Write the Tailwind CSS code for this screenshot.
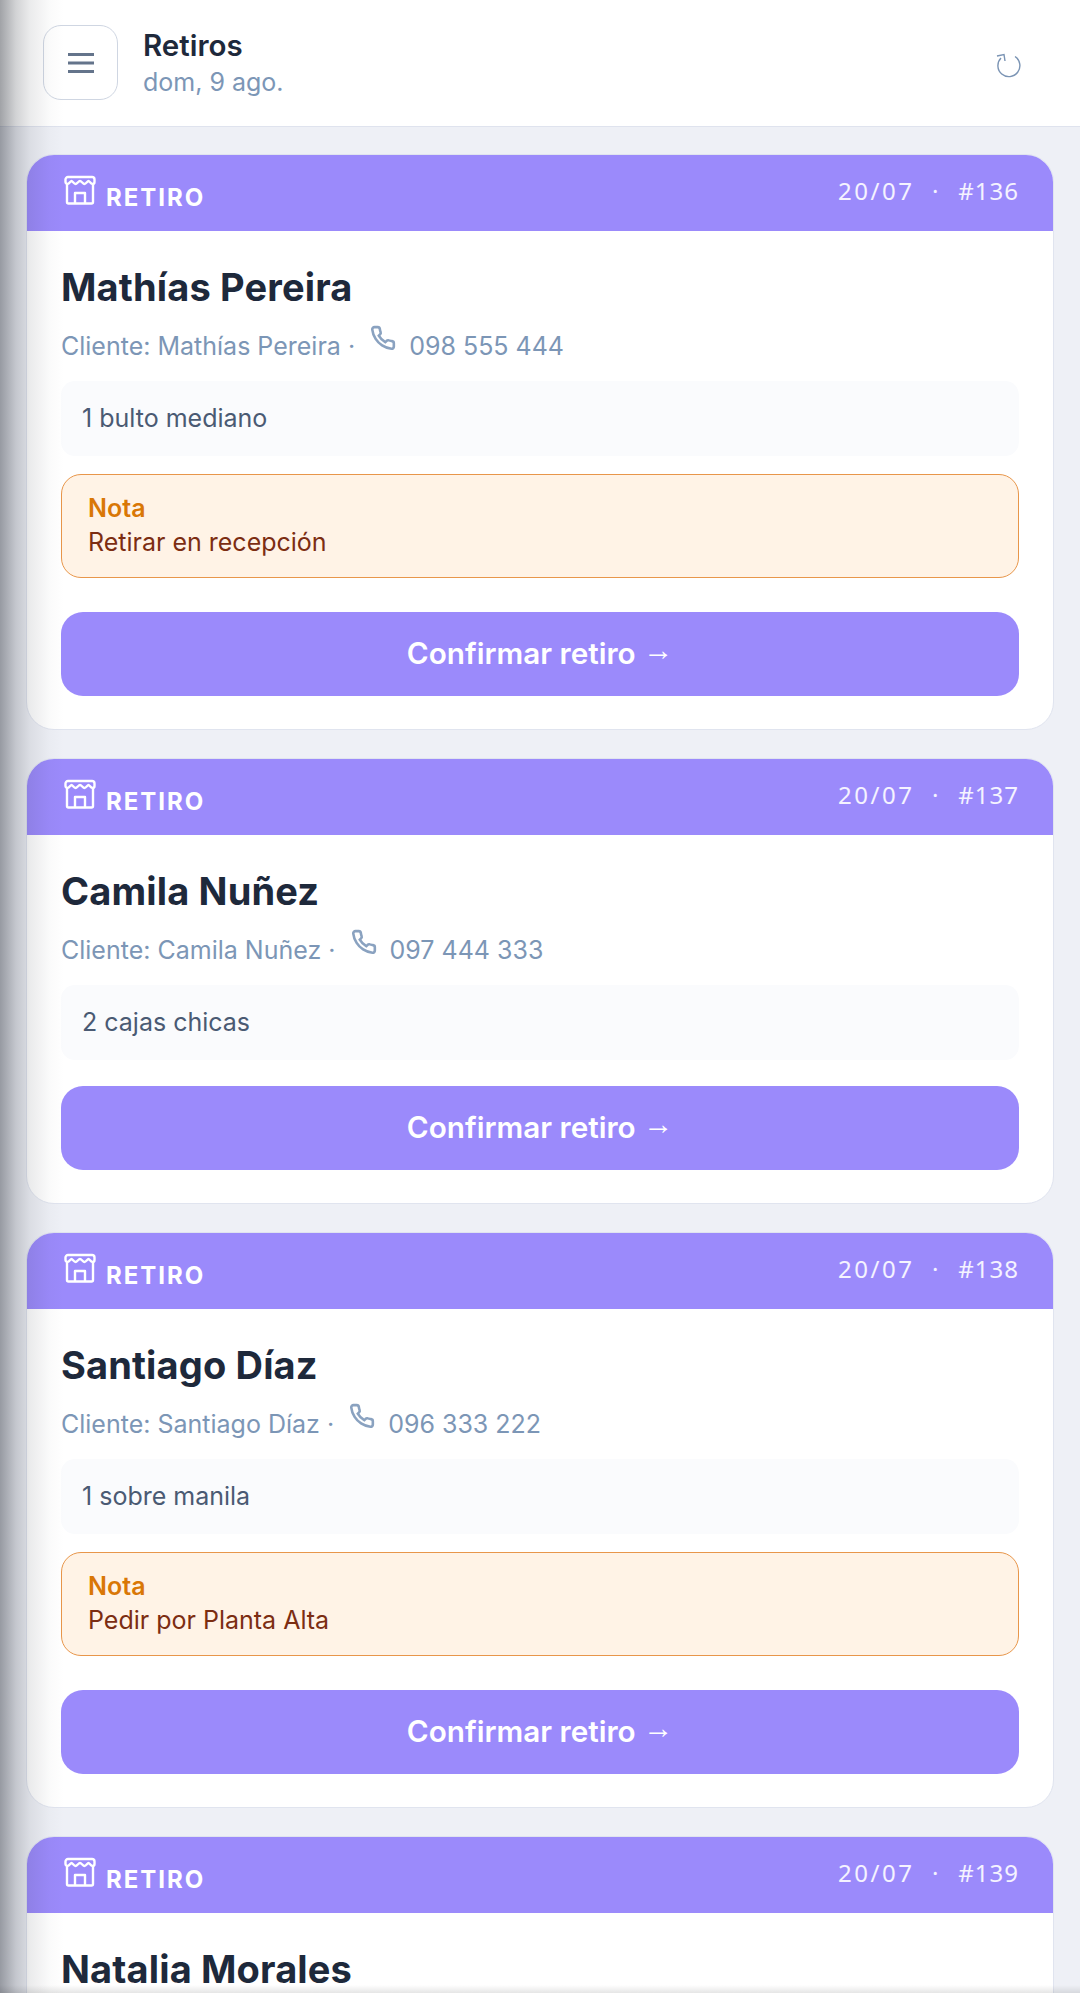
<!doctype html>
<html><head><meta charset="utf-8"><script src="https://cdn.jsdelivr.net/npm/@tailwindcss/browser@4"></script></head>
<body class="bg-[#eef0f6] font-['Inter','Noto_Sans',sans-serif] overflow-hidden">
<div class="relative h-[1993px] overflow-hidden">
<header class="h-[127px] bg-white border-b border-[#dfe3ee] flex items-center pl-[43px] pr-[52px]">
  <button class="w-[75px] h-[75px] mb-[1px] rounded-[18px] border border-[#cfd6e2] flex items-center justify-center mr-[25px]">
    <svg width="26" height="24" viewBox="0 0 26 24" fill="none" stroke="#64748b" stroke-width="3"><path d="M0 3.500h26M0 12h26M0 20.500h26"/></svg>
  </button>
  <div class="flex-1 pt-[2px]">
    <div class="text-[29.500px] leading-[36px] font-semibold text-[#1e293b]">Retiros</div>
    <div class="text-[25px] leading-[38px] text-[#7c96b6]">dom, 9 ago.</div>
  </div>
  <svg class="mb-[-6px] mr-[6px]" width="26" height="26" viewBox="0 0 26 26" fill="none" stroke="#7b94b4" stroke-width="1.400"><path d="M19 3.500A11 11 0 1 1 5 5"/><path d="M1 3l7-1.500 1 6.500"/></svg>
</header>
<main class="px-[26px] pt-[27px] flex flex-col gap-[28px]">
  <article class="rounded-[28px] bg-white border-[1.500px] border-[#e0e4ef] overflow-hidden">
    <div class="h-[76px] bg-[#9b8afb] flex justify-between pl-[37px] pr-[34px] text-white">
      <div class="flex items-center gap-[10px]"><svg width="32" height="30" viewBox="0 0 32 30" fill="none" stroke="white" stroke-width="2.400" stroke-linejoin="round" class="mt-[-6px]"><path d="M3 10v17a1.500 1.500 0 0 0 1.500 1.500h23a1.500 1.500 0 0 0 1.500-1.500V10"/><path d="M4 2h24a2.500 2.500 0 0 1 2.500 2.500V7a2 2 0 0 1-2 2c-2 0-3-3-4-3s-2.500 3-4 3-3-3-4.500-3-3 3-4.500 3-3-3-4-3-2 3-4 3a2 2 0 0 1-2-2V4.500A2.500 2.500 0 0 1 4 2z"/><path d="M11 28V18h10v10"/></svg><span class="text-[24px] font-bold tracking-[2px] mt-[10px]">RETIRO</span></div>
      <div class="text-[24px] font-['Noto_Sans',sans-serif] tracking-[2.500px] text-white/90 pt-[21px] leading-[30px] whitespace-pre">20/07  ·  <span class="tracking-[1px]">#136</span></div>
    </div>
    <div class="px-[34px] pt-[34px] pb-[33px]">
      <h2 class="text-[38px] tracking-[0.150px] leading-[44px] font-bold text-[#1e293b]">Mathías Pereira</h2>
      <p class="mt-[16px] text-[25px] leading-[32px] text-[#7c96b6]">Cliente: Mathías Pereira · <svg class="inline align-[4px] ml-[8px] mr-[6px]" width="26" height="26" viewBox="0 0 24 24" fill="none" stroke="#8aa2c0" stroke-width="2.400"><path d="M22 16.900v3a2 2 0 0 1-2.200 2 19.800 19.800 0 0 1-8.600-3.100 19.500 19.500 0 0 1-6-6A19.800 19.800 0 0 1 2.100 4.200 2 2 0 0 1 4.100 2h3a2 2 0 0 1 2 1.700c.1 1 .4 1.900.7 2.800a2 2 0 0 1-.5 2.100L8.100 9.900a16 16 0 0 0 6 6l1.300-1.300a2 2 0 0 1 2.100-.4c.9.300 1.800.6 2.800.7a2 2 0 0 1 1.700 2z"/></svg> 098 555 444</p>
      <div class="mt-[19px] h-[75px] rounded-[14px] bg-[#fafbfd] flex items-center px-[21px] text-[25px] text-[#4a5a73]">1 bulto mediano</div>
      <div class="mt-[18px] h-[104px] rounded-[20px] border-[1.500px] border-[#e8964a] bg-[#fff3e6] px-[26px] pb-[2px] flex flex-col justify-center"><div class="text-[25px] leading-[34px] font-semibold text-[#d97706]">Nota</div><div class="text-[25px] leading-[34px] text-[#7c2d12]">Retirar en recepción</div></div>
      <button class="mt-[34px] w-full h-[84px] rounded-[22px] bg-[#9b8afb] text-white text-[29.700px] font-semibold pb-[2px]">Confirmar retiro <span class="inline-block -translate-y-[4px] font-['Liberation_Sans',sans-serif] font-bold text-[30px] leading-none">→</span></button>
    </div>
  </article>
  <article class="rounded-[28px] bg-white border-[1.500px] border-[#e0e4ef] overflow-hidden">
    <div class="h-[76px] bg-[#9b8afb] flex justify-between pl-[37px] pr-[34px] text-white">
      <div class="flex items-center gap-[10px]"><svg width="32" height="30" viewBox="0 0 32 30" fill="none" stroke="white" stroke-width="2.400" stroke-linejoin="round" class="mt-[-6px]"><path d="M3 10v17a1.500 1.500 0 0 0 1.500 1.500h23a1.500 1.500 0 0 0 1.500-1.500V10"/><path d="M4 2h24a2.500 2.500 0 0 1 2.500 2.500V7a2 2 0 0 1-2 2c-2 0-3-3-4-3s-2.500 3-4 3-3-3-4.500-3-3 3-4.500 3-3-3-4-3-2 3-4 3a2 2 0 0 1-2-2V4.500A2.500 2.500 0 0 1 4 2z"/><path d="M11 28V18h10v10"/></svg><span class="text-[24px] font-bold tracking-[2px] mt-[10px]">RETIRO</span></div>
      <div class="text-[24px] font-['Noto_Sans',sans-serif] tracking-[2.500px] text-white/90 pt-[21px] leading-[30px] whitespace-pre">20/07  ·  <span class="tracking-[1px]">#137</span></div>
    </div>
    <div class="px-[34px] pt-[34px] pb-[33px]">
      <h2 class="text-[38px] tracking-[0.150px] leading-[44px] font-bold text-[#1e293b]">Camila Nuñez</h2>
      <p class="mt-[16px] text-[25px] leading-[32px] text-[#7c96b6]">Cliente: Camila Nuñez · <svg class="inline align-[4px] ml-[8px] mr-[6px]" width="26" height="26" viewBox="0 0 24 24" fill="none" stroke="#8aa2c0" stroke-width="2.400"><path d="M22 16.900v3a2 2 0 0 1-2.200 2 19.800 19.800 0 0 1-8.600-3.100 19.500 19.500 0 0 1-6-6A19.800 19.800 0 0 1 2.100 4.200 2 2 0 0 1 4.100 2h3a2 2 0 0 1 2 1.700c.1 1 .4 1.900.7 2.800a2 2 0 0 1-.5 2.100L8.100 9.900a16 16 0 0 0 6 6l1.300-1.300a2 2 0 0 1 2.100-.4c.9.300 1.800.6 2.800.7a2 2 0 0 1 1.700 2z"/></svg> 097 444 333</p>
      <div class="mt-[19px] h-[75px] rounded-[14px] bg-[#fafbfd] flex items-center px-[21px] text-[25px] text-[#4a5a73]">2 cajas chicas</div>
      <button class="mt-[26px] w-full h-[84px] rounded-[22px] bg-[#9b8afb] text-white text-[29.700px] font-semibold pb-[2px]">Confirmar retiro <span class="inline-block -translate-y-[4px] font-['Liberation_Sans',sans-serif] font-bold text-[30px] leading-none">→</span></button>
    </div>
  </article>
  <article class="rounded-[28px] bg-white border-[1.500px] border-[#e0e4ef] overflow-hidden">
    <div class="h-[76px] bg-[#9b8afb] flex justify-between pl-[37px] pr-[34px] text-white">
      <div class="flex items-center gap-[10px]"><svg width="32" height="30" viewBox="0 0 32 30" fill="none" stroke="white" stroke-width="2.400" stroke-linejoin="round" class="mt-[-6px]"><path d="M3 10v17a1.500 1.500 0 0 0 1.500 1.500h23a1.500 1.500 0 0 0 1.500-1.500V10"/><path d="M4 2h24a2.500 2.500 0 0 1 2.500 2.500V7a2 2 0 0 1-2 2c-2 0-3-3-4-3s-2.500 3-4 3-3-3-4.500-3-3 3-4.500 3-3-3-4-3-2 3-4 3a2 2 0 0 1-2-2V4.500A2.500 2.500 0 0 1 4 2z"/><path d="M11 28V18h10v10"/></svg><span class="text-[24px] font-bold tracking-[2px] mt-[10px]">RETIRO</span></div>
      <div class="text-[24px] font-['Noto_Sans',sans-serif] tracking-[2.500px] text-white/90 pt-[21px] leading-[30px] whitespace-pre">20/07  ·  <span class="tracking-[1px]">#138</span></div>
    </div>
    <div class="px-[34px] pt-[34px] pb-[33px]">
      <h2 class="text-[38px] tracking-[0.150px] leading-[44px] font-bold text-[#1e293b]">Santiago Díaz</h2>
      <p class="mt-[16px] text-[25px] leading-[32px] text-[#7c96b6]">Cliente: Santiago Díaz · <svg class="inline align-[4px] ml-[8px] mr-[6px]" width="26" height="26" viewBox="0 0 24 24" fill="none" stroke="#8aa2c0" stroke-width="2.400"><path d="M22 16.900v3a2 2 0 0 1-2.200 2 19.800 19.800 0 0 1-8.600-3.100 19.500 19.500 0 0 1-6-6A19.800 19.800 0 0 1 2.100 4.200 2 2 0 0 1 4.100 2h3a2 2 0 0 1 2 1.700c.1 1 .4 1.900.7 2.800a2 2 0 0 1-.5 2.100L8.100 9.900a16 16 0 0 0 6 6l1.300-1.300a2 2 0 0 1 2.100-.4c.9.300 1.800.6 2.800.7a2 2 0 0 1 1.700 2z"/></svg> 096 333 222</p>
      <div class="mt-[19px] h-[75px] rounded-[14px] bg-[#fafbfd] flex items-center px-[21px] text-[25px] text-[#4a5a73]">1 sobre manila</div>
      <div class="mt-[18px] h-[104px] rounded-[20px] border-[1.500px] border-[#e8964a] bg-[#fff3e6] px-[26px] pb-[2px] flex flex-col justify-center"><div class="text-[25px] leading-[34px] font-semibold text-[#d97706]">Nota</div><div class="text-[25px] leading-[34px] text-[#7c2d12]">Pedir por Planta Alta</div></div>
      <button class="mt-[34px] w-full h-[84px] rounded-[22px] bg-[#9b8afb] text-white text-[29.700px] font-semibold pb-[2px]">Confirmar retiro <span class="inline-block -translate-y-[4px] font-['Liberation_Sans',sans-serif] font-bold text-[30px] leading-none">→</span></button>
    </div>
  </article>
  <article class="rounded-[28px] bg-white border-[1.500px] border-[#e0e4ef] overflow-hidden">
    <div class="h-[76px] bg-[#9b8afb] flex justify-between pl-[37px] pr-[34px] text-white">
      <div class="flex items-center gap-[10px]"><svg width="32" height="30" viewBox="0 0 32 30" fill="none" stroke="white" stroke-width="2.400" stroke-linejoin="round" class="mt-[-6px]"><path d="M3 10v17a1.500 1.500 0 0 0 1.500 1.500h23a1.500 1.500 0 0 0 1.500-1.500V10"/><path d="M4 2h24a2.500 2.500 0 0 1 2.500 2.500V7a2 2 0 0 1-2 2c-2 0-3-3-4-3s-2.500 3-4 3-3-3-4.500-3-3 3-4.500 3-3-3-4-3-2 3-4 3a2 2 0 0 1-2-2V4.500A2.500 2.500 0 0 1 4 2z"/><path d="M11 28V18h10v10"/></svg><span class="text-[24px] font-bold tracking-[2px] mt-[10px]">RETIRO</span></div>
      <div class="text-[24px] font-['Noto_Sans',sans-serif] tracking-[2.500px] text-white/90 pt-[21px] leading-[30px] whitespace-pre">20/07  ·  <span class="tracking-[1px]">#139</span></div>
    </div>
    <div class="px-[34px] pt-[34px] pb-[33px]">
      <h2 class="text-[38px] tracking-[0.150px] leading-[44px] font-bold text-[#1e293b]">Natalia Morales</h2>
    </div>
  </article>
</main>
<div class="absolute inset-y-0 left-0 w-[64px] bg-[linear-gradient(to_right,rgba(30,35,45,0.42)_0px,rgba(30,35,45,0.2)_16px,rgba(30,35,45,0.09)_30px,rgba(30,35,45,0.02)_50px,transparent_64px)] pointer-events-none"></div>
<div class="absolute inset-x-0 bottom-0 h-[8px] bg-gradient-to-t from-black/10 to-transparent pointer-events-none"></div>
</div>
</body></html>
